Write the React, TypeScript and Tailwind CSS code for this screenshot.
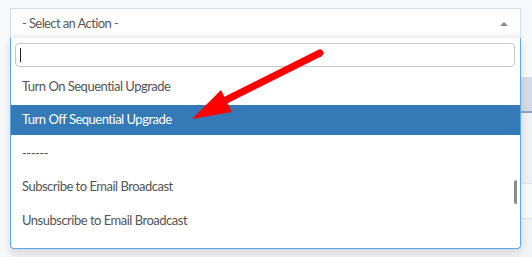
const options = [
  "Turn On Sequential Upgrade",
  "Turn Off Sequential Upgrade",
  "------",
  "Subscribe to Email Broadcast",
  "Unsubscribe to Email Broadcast",
];

const highlighted = 1;

function ActionSelect() {
  return (
    <div className="relative">
      <div className="flex h-[30px] items-center justify-between border border-b-0 border-[#cfdff0] bg-gradient-to-b from-white from-75% to-[#f2f2f2] pl-[11px] pr-[11px] text-[13px] tracking-[-0.6px] text-[#5a5a5a]">
        <span>- Select an Action -</span>
        <span className="mr-[1px] h-0 w-0 border-x-[4px] border-b-[4px] border-x-transparent border-b-[#8a8a8a]" />
      </div>

      <div className="absolute left-0 right-0 top-full z-10 h-[211px] rounded-b-[4px] border border-t-0 border-[#5aa9ef] bg-white shadow-[0_4px_10px_rgba(0,0,0,0.12)]">
        <div className="pl-[4px] pr-[5px] pt-[5px]">
          <div className="flex h-[24px] items-center rounded-[4px] border border-[#c9c9c9] pl-[4px]">
            <span className="h-[14px] w-px bg-[#222]" />
          </div>
        </div>

        <ul className="mt-[4px] flex flex-col gap-[3.5px] text-[13px] tracking-[-0.5px] text-[#555]">
          {options.map((opt, i) => (
            <li
              key={opt}
              className={
                i === highlighted
                  ? "flex h-[30px] items-center bg-[#337ab7] pl-[11px] pt-[1px] text-white"
                  : "flex h-[30px] items-center pl-[11px] pt-[1px]"
              }
            >
              {opt}
            </li>
          ))}
        </ul>

        <div className="absolute right-[3px] top-[142px] h-[24px] w-[3px] rounded-sm bg-[#8c8c8c]" />
      </div>
    </div>
  );
}

export default function App() {
  return (
    <div className="relative h-[257px] w-[532px] overflow-hidden bg-[#f7f8fa] font-['Lato',sans-serif]">
      <div className="pl-[10px] pr-[11px] pt-[8px]">
        <ActionSelect />
      </div>

      {/* table sitting behind the open dropdown */}
      <div className="ml-[11px] mt-[39px]">
        <div className="h-[36px] border-b-2 border-[#8ea4c4] bg-[#d5dce7]" />
        <div className="h-[71px] border-b border-[#e2e6ec] bg-[#f0f1f5]" />
        <div className="h-[35px] border-b border-[#dde3ea] bg-[#f7f8fa]" />
        <div className="h-[40px] bg-[#f2f3f6]" />
      </div>

      <svg
        className="pointer-events-none absolute inset-0 z-20"
        width="532"
        height="257"
        viewBox="0 0 532 257"
      >
        <line x1="320" y1="53" x2="224" y2="101" stroke="#ff0000" strokeWidth="7" strokeLinecap="round" />
        <polygon points="192,119 221,90 232,112" fill="#ff0000" />
      </svg>
    </div>
  );
}
